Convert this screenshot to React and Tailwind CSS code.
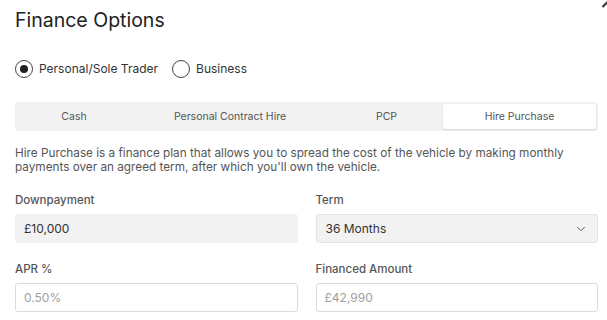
import { ChevronDown } from "lucide-react";

const tabs = [
  { label: "Cash", width: "w-[112px]" },
  { label: "Personal Contract Hire", width: "w-[200px]" },
  { label: "PCP", width: "w-[113px]" },
  { label: "Hire Purchase", width: "flex-1", active: true },
];

function Radio({ label, checked }) {
  return (
    <label className="flex items-center gap-[6px]">
      <span className="flex h-[18px] w-[18px] items-center justify-center rounded-full border border-[#444] bg-white">
        {checked ? <span className="h-[8px] w-[8px] rounded-full bg-[#222]" /> : null}
      </span>
      <span className="text-[12px] text-[#333]">{label}</span>
    </label>
  );
}

function Field({ label, children }) {
  return (
    <div className="flex flex-col">
      <span className="mb-[7px] text-[11.5px] font-medium leading-[14px] text-[#555]">{label}</span>
      {children}
    </div>
  );
}

export default function App() {
  return (
    <div className="relative h-[320px] w-[607px] overflow-hidden bg-white pl-[15px] pr-[9px] font-['Inter',sans-serif]">
      <span className="absolute right-[1px] top-[1px] block h-[7px] w-[2px] rotate-45 bg-[#333]" />

      <h2 className="pt-[8px] text-[19.5px] leading-[24px] text-[#222]">Finance Options</h2>

      <div className="mt-[28px] flex items-center gap-[14px]">
        <Radio label="Personal/Sole Trader" checked />
        <Radio label="Business" />
      </div>

      <div className="mt-[24px] flex h-[29px] rounded-[3px] bg-[#f2f2f2] p-[2px] pl-[3px]">
        {tabs.map((tab) => (
          <button
            key={tab.label}
            type="button"
            className={`${tab.width} flex items-center justify-center rounded-[3px] text-[10.5px] text-[#555] ${
              tab.active ? "bg-white text-[#222] shadow-[0_1px_2px_rgba(0,0,0,0.12)]" : ""
            }`}
          >
            {tab.label}
          </button>
        ))}
      </div>

      <p className="mt-[15px] text-[11.75px] leading-[14px] text-[#555]">
        Hire Purchase is a finance plan that allows you to spread the cost of the vehicle by making monthly
        payments over an agreed term, after which you'll own the vehicle.
      </p>

      <div className="mt-[19px] grid grid-cols-2 gap-x-[18px] gap-y-[19px]">
        <Field label="Downpayment">
          <div className="flex h-[29px] items-center rounded-[3px] bg-[#f2f2f2] px-[9px] text-[12px] text-[#333]">
            £10,000
          </div>
        </Field>
        <Field label="Term">
          <div className="flex h-[29px] items-center justify-between rounded-[3px] border border-[#e4e4e4] bg-[#f2f2f2] px-[9px] text-[12px] text-[#333]">
            <span>36 Months</span>
            <ChevronDown size={14} strokeWidth={1.6} className="text-[#555]" />
          </div>
        </Field>
        <Field label="APR %">
          <div className="flex h-[29px] items-center rounded-[3px] border border-[#dcdcdc] bg-white px-[8px] text-[12px] text-[#a0a0a0]">
            0.50%
          </div>
        </Field>
        <Field label="Financed Amount">
          <div className="flex h-[29px] items-center rounded-[3px] border border-[#dcdcdc] bg-white px-[8px] text-[12px] text-[#a0a0a0]">
            £42,990
          </div>
        </Field>
      </div>
    </div>
  );
}
